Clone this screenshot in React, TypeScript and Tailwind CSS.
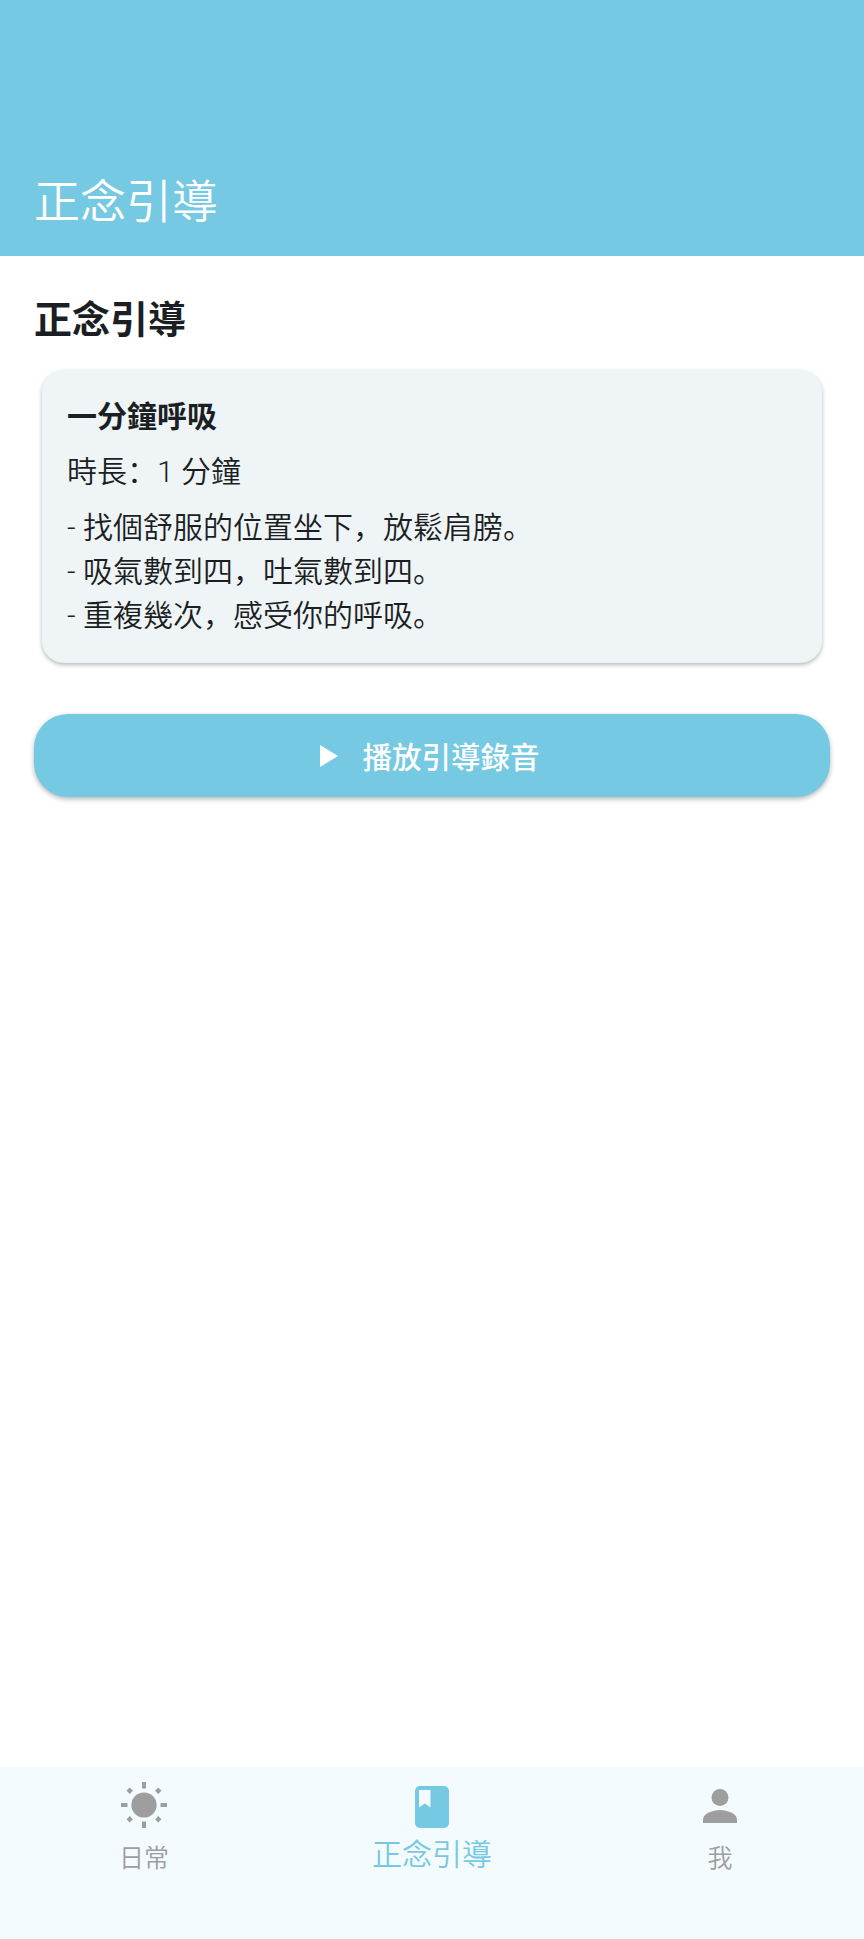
const font = { fontFamily: 'Roboto, "Noto Sans CJK SC", "Noto Sans CJK TC", sans-serif' }

const SunIcon = () => (
  <svg width="46" height="46" viewBox="0 0 46 46" fill="#9e9e9e">
    <circle cx="23" cy="23" r="12.6" />
    <rect x="21" y="0" width="4" height="6.5" />
    <rect x="21" y="39.5" width="4" height="6.5" />
    <rect x="0" y="21" width="6.5" height="4" />
    <rect x="39.5" y="21" width="6.5" height="4" />
    <rect x="6.5" y="6.5" width="4.5" height="4.5" transform="rotate(45 8.75 8.75)" />
    <rect x="35" y="6.5" width="4.5" height="4.5" transform="rotate(45 37.25 8.75)" />
    <rect x="6.5" y="35" width="4.5" height="4.5" transform="rotate(45 8.75 37.25)" />
    <rect x="35" y="35" width="4.5" height="4.5" transform="rotate(45 37.25 37.25)" />
  </svg>
)

const BookIcon = () => (
  <svg width="34" height="42" viewBox="0 0 34 42">
    <rect width="34" height="42" rx="5" fill="#76c9e3" />
    <path d="M4 4h11.500v17.500l-5.750-4-5.750 4z" fill="#f3fbfe" />
  </svg>
)

const PersonIcon = () => (
  <svg width="34" height="34" viewBox="0 0 34 34" fill="#9e9e9e">
    <circle cx="17" cy="8.500" r="8.500" />
    <path d="M0 34v-3.500C0 24.500 10 21 17 21s17 3.500 17 9.500V34z" />
  </svg>
)

export default function App() {
  return (
    <div className="flex h-[1939px] flex-col bg-white" style={font}>
      {/* Header */}
      <header className="flex h-[256px] items-end bg-[#76c9e3] px-[34px] pb-[23px]">
        <h1 className="text-[46px] leading-[62px] font-[350] text-white">正念引導</h1>
      </header>

      <main className="flex-1 px-[34px]">
        <h2 className="mt-[36px] text-[38px] leading-[56px] font-bold text-[#1b1f23]">正念引導</h2>

        {/* Guide card */}
        <div className="mx-[8px] mt-[22px] h-[293px] rounded-[22px] bg-[#eff4f7] px-[25px] pt-[25px] text-[#1b1f23] shadow-[0_2px_4px_rgba(0,0,0,0.28)]">
          <h3 className="text-[30px] leading-[44px] font-bold">一分鐘呼吸</h3>
          <p className="mt-[11px] text-[30px] leading-[44px] font-[350]">{'時長\uFF1A1 分鐘'}</p>
          <p className="mt-[12px] text-[30px] leading-[44px] font-[350]">{'- 找個舒服的位置坐下\uFF0C放鬆肩膀。'}</p>
          <p className="text-[30px] leading-[44px] font-[350]">{'- 吸氣數到四\uFF0C吐氣數到四。'}</p>
          <p className="text-[30px] leading-[44px] font-[350]">{'- 重複幾次\uFF0C感受你的呼吸。'}</p>
        </div>

        {/* Play button */}
        <button className="mt-[51px] flex h-[83px] w-full items-center justify-center gap-[24px] rounded-[34px] bg-[#76c9e3] pr-[4px] text-[29.5px] font-medium text-white shadow-[0_2px_5px_rgba(0,0,0,0.3)]">
          <svg width="18" height="22" viewBox="0 0 18 22" fill="#fff">
            <path d="M0 0l18 11L0 22z" />
          </svg>
          <span className="translate-y-[3px]">播放引導錄音</span>
        </button>
      </main>

      {/* Bottom tabs */}
      <nav className="grid h-[172px] grid-cols-3 bg-[#f3fbfe]">
        <div className="flex flex-col items-center pt-[15px] text-[25px] leading-[34px] font-[350] text-[#9e9e9e]">
          <SunIcon />
          <span className="mt-[14px]">日常</span>
        </div>
        <div className="flex flex-col items-center pt-[19px] text-[30px] leading-[40px] font-[350] text-[#76c9e3]">
          <BookIcon />
          <span className="mt-[7px]">正念引導</span>
        </div>
        <div className="flex flex-col items-center pt-[22px] text-[25px] leading-[34px] font-[350] text-[#9e9e9e]">
          <PersonIcon />
          <span className="mt-[19px]">我</span>
        </div>
      </nav>
    </div>
  )
}
